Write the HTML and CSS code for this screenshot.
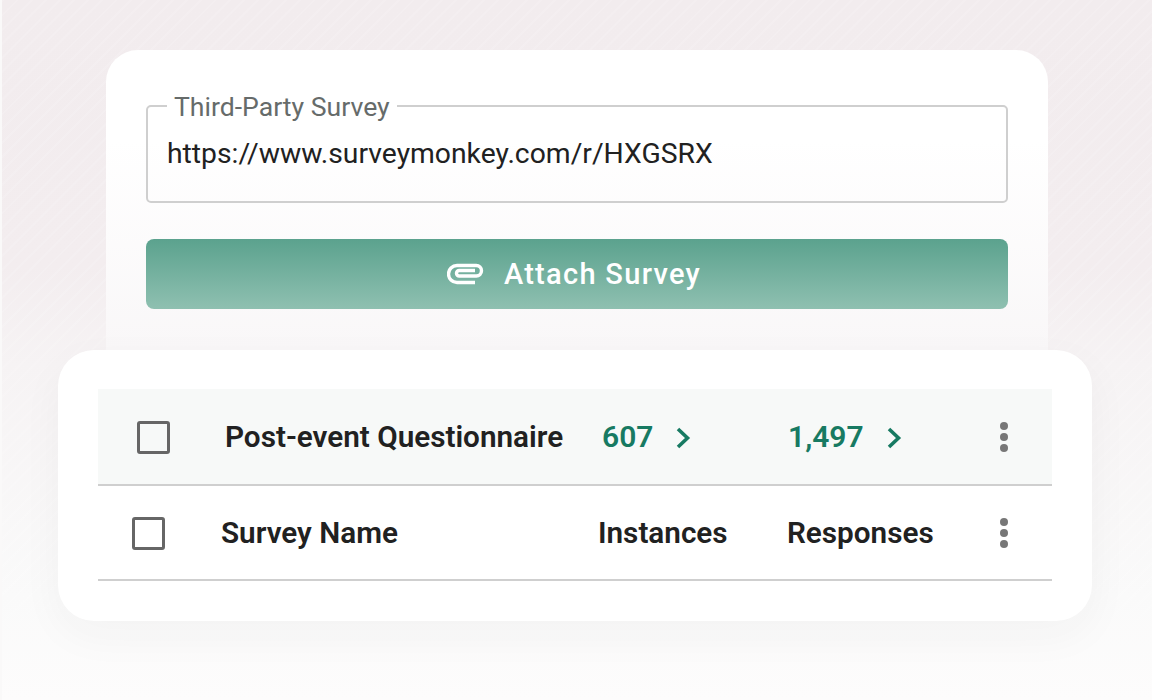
FILE: index.html
```html
<!DOCTYPE html>
<html lang="en">
<head>
<meta charset="utf-8">
<title>Third-Party Survey</title>
<link rel="stylesheet" href="styles.css">
</head>
<body>
<main class="stage">
  <section class="card card-form">
    <fieldset class="field">
      <legend class="field-label">Third-Party Survey</legend>
      <div class="field-value">https://www.surveymonkey.com/r/HXGSRX</div>
    </fieldset>
    <button class="attach" type="button">
      <svg class="clip" width="38" height="22" viewBox="0 0 38 22" aria-hidden="true"><path d="M28 19.500H10a8.500 8.500 0 0 1 0-17H29.250a5.250 5.250 0 0 1 0 10.500H12.250a2.750 2.750 0 0 1 0-5.500H28" fill="none" stroke="#fff" stroke-width="3.400"/></svg>
      <span>Attach Survey</span>
    </button>
  </section>
  <section class="card card-table">
    <div class="row row-item">
      <span class="check"></span>
      <span class="name">Post-event Questionnaire</span>
      <a class="count">607<svg class="chev" width="16" height="22" viewBox="0 0 16 22" aria-hidden="true"><path d="M3 2L12.500 11 3 20" fill="none" stroke="#177a62" stroke-width="3.600"/></svg></a>
      <a class="count">1,497<svg class="chev" width="16" height="22" viewBox="0 0 16 22" aria-hidden="true"><path d="M3 2L12.500 11 3 20" fill="none" stroke="#177a62" stroke-width="3.600"/></svg></a>
      <span class="dots"><i></i><i></i><i></i></span>
    </div>
    <div class="row row-head">
      <span class="check"></span>
      <span class="name">Survey Name</span>
      <span class="name">Instances</span>
      <span class="name">Responses</span>
      <span class="dots"><i></i><i></i><i></i></span>
    </div>
  </section>
</main>
</body>
</html>
```
FILE: styles.css
```css
* { box-sizing: border-box; }
html, body { margin: 0; padding: 0; }
body { width: 1152px; height: 700px; overflow: hidden; font-family: Roboto, "Liberation Sans", sans-serif; }

.stage {
  width: 1152px;
  height: 700px;
  padding-top: 50px;
  display: flex;
  flex-direction: column;
  align-items: center;
  border-left: 2px solid #faf9f9;
  background:
    repeating-linear-gradient(135deg, rgba(255,255,255,.12) 0 2px, rgba(255,255,255,0) 2px 10px),
    linear-gradient(180deg, #f2ecee 0%, #f3edef 38%, #f6f3f4 52%, #fafafa 85%, #fdfcfc 100%);
}

.card { background: #fff; }

.card-form {
  width: 942px;
  height: 300px;
  padding: 42px 40px 0;
  border-radius: 32px 32px 0 0;
  background: linear-gradient(180deg, #fff 0%, #fff 30%, #f9f7f8 100%);
}

.field {
  margin: 0;
  height: 111px;
  padding: 0 19px;
  border: 2px solid #cfcfcf;
  border-radius: 5px;
  min-width: 0;
}
.field-label {
  margin-left: 0;
  padding: 2px 7px 0;
  font-size: 26.600px;
  line-height: 26px;
  color: #666b6a;
}
.field-value {
  margin-top: 18px;
  font-size: 28.300px;
  line-height: 32px;
  color: #212121;
}

.attach {
  margin-top: 36px;
  width: 100%;
  height: 70px;
  padding: 0 6px 0 0;
  display: flex;
  align-items: center;
  justify-content: center;
  gap: 19px;
  border: 0;
  border-radius: 8px;
  background: linear-gradient(180deg, #5ba28e 0%, #8fc0b1 100%);
  color: #fff;
  font: 500 29px Roboto, sans-serif;
  letter-spacing: 1.300px;
}

.card-table {
  width: 1034px;
  height: 271px;
  margin-right: 4px;
  padding: 39px 40px 0;
  border-radius: 36px;
  box-shadow: 0 14px 44px rgba(60, 40, 50, .04);
}

.row {
  display: grid;
  align-items: center;
  height: 95px;
  border-bottom: 2px solid #cfcfcf;
  font-size: 29.700px;
  font-weight: 600;
  color: #212121;
}
.row-item {
  background: #f7f9f8;
  grid-template-columns: 88px 377px 186px 212px 1fr;
  padding-left: 39px;
  height: 97px;
}
.row-head {
  grid-template-columns: 89px 377px 189px 213px 1fr;
  padding-left: 34px;
}

.check {
  width: 33px;
  height: 33px;
  margin-top: 1px;
  border: 3px solid #666;
  border-radius: 3px;
  background: #fff;
}
.row-item .check { background: transparent; }

.count {
  display: flex;
  align-items: center;
  gap: 22px;
  font-size: 30px;
  color: #177a62;
}
.chev { margin-top: 2px; }

.dots { display: flex; flex-direction: column; gap: 3px; width: 8px; margin-top: 1px; }
.dots i { width: 8px; height: 8px; border-radius: 50%; background: #777; }
```
